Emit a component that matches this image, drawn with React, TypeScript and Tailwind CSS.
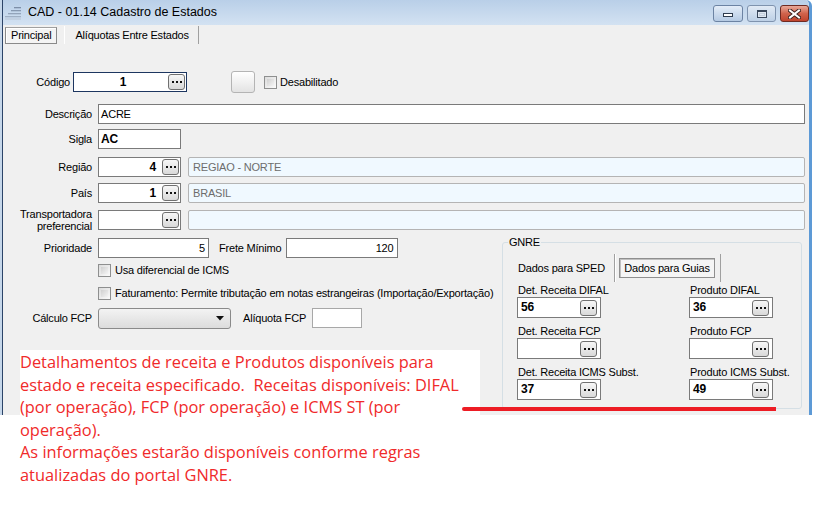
import React from 'react';

const ui = "font-['Liberation_Sans',Arial,sans-serif] text-[11px] leading-[13px] tracking-[-0.2px] text-black";

function Dots({ className = '' }: { className?: string }) {
  return (
    <div
      className={`w-[17px] h-[16px] shrink-0 rounded-[3px] border border-[#707070] bg-gradient-to-b from-[#f7f7f7] to-[#d9d9d9] flex items-center justify-center gap-[2px] ${className}`}
    >
      <span className="w-[2px] h-[2px] bg-[#111]"></span>
      <span className="w-[2px] h-[2px] bg-[#111]"></span>
      <span className="w-[2px] h-[2px] bg-[#111]"></span>
    </div>
  );
}

function Check() {
  return (
    <div className="w-[13px] h-[13px] shrink-0 border border-[#8e8f8f] bg-gradient-to-br from-[#dcdcdc] to-[#fbfbfb] p-[2px]">
      <div className="w-full h-full bg-gradient-to-br from-[#d0d0d0] to-[#f4f4f4]"></div>
    </div>
  );
}

function Label({ children }: { children: React.ReactNode }) {
  return <span className="w-[89px] shrink-0 text-right">{children}</span>;
}

function LookupBox({ value, w = 'w-[83px]' }: { value?: string; w?: string }) {
  return (
    <div className={`${w} h-[20px] ml-[6px] shrink-0 flex items-center border border-[#7a7a7a] bg-white`}>
      <span className="flex-1 text-right pr-[6px] font-bold text-[12px]">{value}</span>
      <Dots className="mr-[1px]" />
    </div>
  );
}

function ReadOnly({ value }: { value?: string }) {
  return (
    <div className="flex-1 h-[20px] ml-[6px] mr-[4px] flex items-center px-[4px] rounded-[2px] border border-[#b4b4b4] bg-[#f0f9ff] text-[#6d6d6d]">
      {value}
    </div>
  );
}

function GnreField({ label, value }: { label: string; value?: string }) {
  return (
    <div className="w-[84px]">
      <div className="h-[13px] pl-[1px] whitespace-nowrap">{label}</div>
      <div className="h-[21px] flex items-center border border-[#7a7a7a] bg-white">
        <span className="flex-1 pl-[3px] font-bold text-[12px]">{value}</span>
        <Dots className="mr-[3px]" />
      </div>
    </div>
  );
}

function TitleIcon() {
  return (
    <svg width="16" height="14" viewBox="0 0 16 14" className="shrink-0">
      <rect x="9" y="1" width="7" height="1.3" fill="#7d8fa8" />
      <rect x="6" y="4" width="10" height="1.3" fill="#8799b1" />
      <rect x="3" y="7" width="13" height="1.3" fill="#93a4ba" />
      <rect x="0" y="10" width="16" height="1.3" fill="#a0b0c4" />
      <rect x="0" y="12.5" width="16" height="1" fill="#b7c4d3" />
    </svg>
  );
}

export default function App() {
  return (
    <div className={`${ui} relative w-[815px] h-[507px] bg-white overflow-hidden`}>
      {/* Window */}
      <div className="w-[812px] h-[415px] flex flex-col border-l-2 border-r-[3px] border-l-[#c6d7ea] border-r-[#5d9ad6] rounded-tr-[6px] overflow-hidden">
        <div className="flex-1 flex flex-col border-l border-[#2c4468]">
          {/* Title bar */}
          <div className="h-[25px] shrink-0 flex items-center bg-gradient-to-b from-[#b9cfe8] to-[#d3e2f2]">
            <div className="ml-[2px]">
              <TitleIcon />
            </div>
            <span className="ml-[7px] font-['Liberation_Sans',Arial,sans-serif] text-[12.5px] tracking-normal text-black">
              CAD - 01.14 Cadastro de Estados
            </span>
            <div className="ml-auto flex items-start self-start mt-[5px] gap-[4px]">
              <div className="w-[30px] h-[17px] rounded-[3px] border border-[#6c83a3] bg-gradient-to-b from-[#e4edf8] to-[#b5cae3] flex items-center justify-center">
                <div className="w-[10px] h-[4px] mt-[3px] border border-[#2f3c4e] bg-white"></div>
              </div>
              <div className="w-[29px] h-[17px] rounded-[3px] border border-[#7f93ae] bg-gradient-to-b from-[#e1eaf5] to-[#bdd0e6] flex items-center justify-center">
                <div className="w-[10px] h-[8px] border border-[#38465a] border-t-2 bg-[#dfe7f1] p-[1px]">
                  <div className="w-full h-full border border-[#c3cfdd]"></div>
                </div>
              </div>
              <div className="w-[29px] h-[17px] rounded-[3px] border border-[#6e2a22] bg-gradient-to-b from-[#e8a99a] via-[#d0634c] to-[#c0432d] flex items-center justify-center">
                <svg width="13" height="10" viewBox="0 0 13 10">
                  <path d="M2 1.5 L11 8.5 M11 1.5 L2 8.5" stroke="#3d2320" strokeWidth="4" strokeLinecap="square" />
                  <path d="M2 1.5 L11 8.5 M11 1.5 L2 8.5" stroke="#ffffff" strokeWidth="2" strokeLinecap="square" />
                </svg>
              </div>
            </div>
          </div>

          {/* Content */}
          <div className="flex-1 bg-[#f0f0f0] flex flex-col">
            {/* Tabs */}
            <div className="h-[20px] flex items-center">
              <div className="ml-[2px] h-[17px] px-[5px] flex items-center border border-[#8a8a8a] border-t-[#a0a0a0] bg-[#f4f4f4] shadow-[inset_1px_1px_0_#ffffff]">
                Principal
              </div>
              <div className="ml-[7px] h-[18px] flex items-center border-l border-[#ffffff]">
                <span className="pl-[10px] pr-[9px]">Alíquotas Entre Estados</span>
                <div className="h-[18px] border-l border-[#a0a0a0]"></div>
              </div>
            </div>

            {/* Código */}
            <div className="mt-[26px] h-[22px] flex items-center">
              <span className="w-[67px] text-right">Código</span>
              <div className="ml-[3px] w-[114px] h-[20px] flex items-center border border-[#1d3660] bg-white">
                <span className="flex-1 text-center pl-[4px] font-bold text-[12px]">1</span>
                <Dots className="mr-[1px]" />
              </div>
              <div className="ml-[44px] w-[24px] h-[22px] rounded-[3px] border border-[#b4b4b4] bg-gradient-to-b from-[#ffffff] to-[#e3e3e3]"></div>
              <div className="ml-[9px]">
                <Check />
              </div>
              <span className="ml-[3px]">Desabilitado</span>
            </div>

            {/* Descrição */}
            <div className="mt-[11px] h-[20px] flex items-center">
              <Label>Descrição</Label>
              <div className="flex-1 h-[20px] ml-[6px] mr-[4px] flex items-center px-[2px] border border-[#7a7a7a] bg-white">
                ACRE
              </div>
            </div>

            {/* Sigla */}
            <div className="mt-[5px] h-[20px] flex items-center">
              <Label>Sigla</Label>
              <div className="w-[83px] h-[20px] ml-[6px] flex items-center px-[2px] border border-[#7a7a7a] bg-white font-bold text-[12px]">
                AC
              </div>
            </div>

            {/* Região */}
            <div className="mt-[8px] h-[20px] flex items-center">
              <Label>Região</Label>
              <LookupBox value="4" />
              <div className="w-[1px]"></div>
              <ReadOnly value="REGIAO - NORTE" />
            </div>

            {/* País */}
            <div className="mt-[6px] h-[20px] flex items-center">
              <Label>País</Label>
              <LookupBox value="1" />
              <div className="w-[1px]"></div>
              <ReadOnly value="BRASIL" />
            </div>

            {/* Transportadora */}
            <div className="mt-[4px] h-[26px] flex items-center">
              <span className="w-[89px] shrink-0 text-right leading-[12px]">
                Transportadora
                <br />
                preferencial
              </span>
              <LookupBox />
              <div className="w-[1px]"></div>
              <ReadOnly />
            </div>

            {/* Bottom section */}
            <div className="flex mt-[4px]">
              <div className="w-[496px] shrink-0 flex flex-col">
                <div className="mt-[1px] h-[20px] flex items-center">
                  <Label>Prioridade</Label>
                  <div className="w-[111px] h-[20px] ml-[6px] flex items-center justify-end pr-[3px] border border-[#7a7a7a] bg-white">
                    5
                  </div>
                  <span className="ml-[10px]">Frete Mínimo</span>
                  <div className="w-[112px] h-[20px] ml-[5px] flex items-center justify-end pr-[4px] border border-[#7a7a7a] bg-white">
                    120
                  </div>
                </div>
                <div className="mt-[6px] h-[13px] flex items-center pl-[95px]">
                  <Check />
                  <span className="ml-[4px]">Usa diferencial de ICMS</span>
                </div>
                <div className="mt-[10px] h-[13px] flex items-center pl-[95px]">
                  <Check />
                  <span className="ml-[4px] whitespace-nowrap">
                    Faturamento: Permite tributação em notas estrangeiras (Importação/Exportação)
                  </span>
                </div>
                <div className="mt-[8px] h-[20px] flex items-center">
                  <Label>Cálculo FCP</Label>
                  <div className="w-[133px] h-[21px] ml-[6px] flex items-center justify-end pr-[6px] rounded-[3px] border border-[#8a8a8a] bg-gradient-to-b from-[#f3f3f3] to-[#dcdcdc]">
                    <svg width="8" height="5" viewBox="0 0 8 5">
                      <path d="M0 0 H8 L4 4.5 Z" fill="#111" />
                    </svg>
                  </div>
                  <span className="ml-[12px]">Alíquota FCP</span>
                  <div className="w-[50px] h-[20px] ml-[6px] border border-[#a8a8a8] bg-white"></div>
                </div>
              </div>

              {/* GNRE */}
              <fieldset className="ml-[3px] w-[300px] h-[173px] -mt-[1px] rounded-[3px] border border-[#d5dfe5] pl-[14px]">
                <legend className="ml-[-9px] px-[1px] h-[13px]">GNRE</legend>
                <div className="mt-[5px] h-[28px] flex items-center">
                  <span className="w-[97px] pl-[1px]">Dados para SPED</span>
                  <div className="h-[28px] border-l border-[#a0a0a0] border-r border-r-[#ffffff]"></div>
                  <div className="ml-[3px] h-[20px] w-[96px] flex items-center justify-center border border-[#8f8f8f] bg-[#f5f5f5] shadow-[inset_1px_1px_0_#c0c0c0]">
                    Dados para Guias
                  </div>
                  <div className="ml-[5px] h-[28px] border-l border-[#a0a0a0]"></div>
                </div>
                <div className="mt-[2px] grid grid-cols-[172px_84px] gap-y-[7px]">
                  <GnreField label="Det. Receita DIFAL" value="56" />
                  <GnreField label="Produto DIFAL" value="36" />
                  <GnreField label="Det. Receita FCP" />
                  <GnreField label="Produto FCP" />
                  <GnreField label="Det. Receita ICMS Subst." value="37" />
                  <GnreField label="Produto ICMS Subst." value="49" />
                </div>
              </fieldset>
            </div>
          </div>
        </div>
      </div>

      {/* Annotation overlay */}
      <div className="absolute left-[20px] top-[350px] w-[460px] h-[160px] bg-white">
        <p className="mt-[1px] font-['Open_Sans','Lato',sans-serif] text-[16.4px] leading-[22.5px] tracking-normal text-[#f02a2a] whitespace-pre">
          {'Detalhamentos de receita e Produtos disponíveis para\nestado e receita especificado.  Receitas disponíveis: DIFAL\n(por operação), FCP (por operação) e ICMS ST (por\noperação).\nAs informações estarão disponíveis conforme regras\natualizadas do portal GNRE.'}
        </p>
      </div>
      <div className="absolute left-[462px] top-[407px] w-[314px] h-[4px] rounded-l-full bg-[#ed1c24]"></div>
    </div>
  );
}
